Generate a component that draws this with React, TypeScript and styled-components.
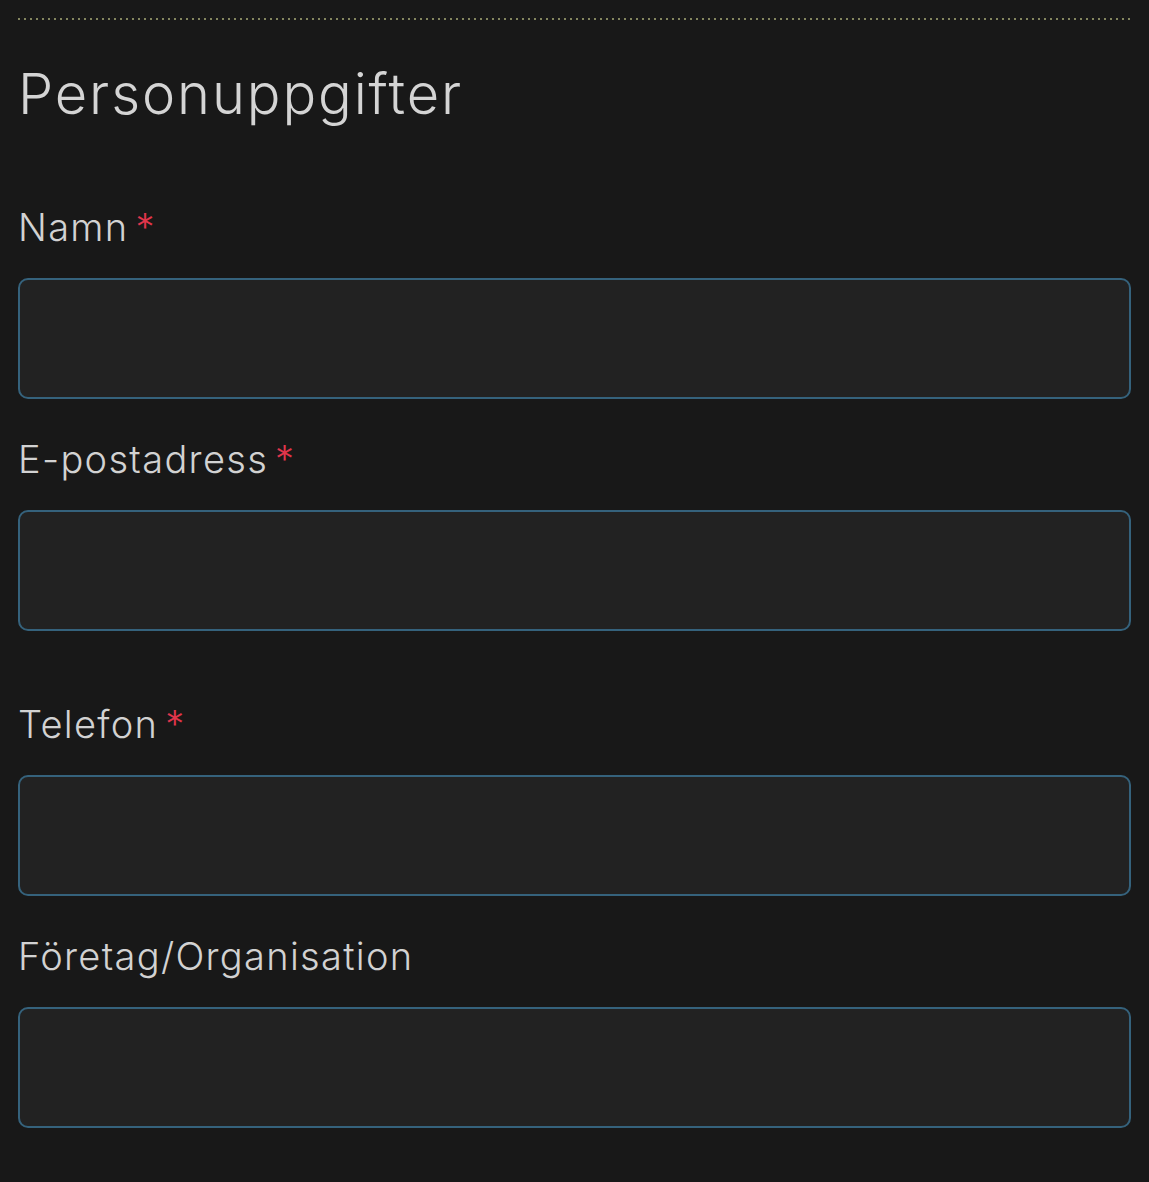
import React from "react";
import styled, { createGlobalStyle } from "styled-components";

const Global = createGlobalStyle`
  html, body {
    margin: 0;
    padding: 0;
    background: #181818;
  }
  body {
    font-family: Inter, "Noto Sans", "Liberation Sans", sans-serif;
    color: #d2d2d2;
  }
`;

const Page = styled.form`
  padding: 18px 18px 40px;
  display: flex;
  flex-direction: column;
`;

const Divider = styled.div`
  height: 2px;
  background-image: repeating-linear-gradient(
    to right,
    #84865f 0,
    #84865f 2px,
    transparent 2px,
    transparent 6px
  );
`;

const Heading = styled.h2`
  margin: 46px 0 86px;
  font-size: 56px;
  line-height: 56px;
  font-weight: 300;
  color: #d4d4d4;
  letter-spacing: 1.9px;
`;

const Field = styled.div<{ $extra?: number }>`
  display: flex;
  flex-direction: column;
  margin-bottom: ${(p) => 41 + (p.$extra ?? 0)}px;
`;

const Label = styled.label`
  display: flex;
  align-items: baseline;
  gap: 7px;
  font-size: 38px;
  line-height: 38px;
  font-weight: 300;
  color: #d2d2d2;
  letter-spacing: 1.3px;
  margin-bottom: 32px;
`;

const Required = styled.span`
  color: #e0354b;
  font-size: 38px;
  letter-spacing: 0;
`;

const Input = styled.input`
  box-sizing: border-box;
  width: 100%;
  height: 121px;
  background: #222222;
  border: 2px solid #35627c;
  border-radius: 10px;
  padding: 0 24px;
  font-family: inherit;
  font-size: 36px;
  color: #e0e0e0;
  outline: none;
`;

const fields: { label: string; required: boolean; type: string; extra?: number }[] = [
  { label: "Namn", required: true, type: "text" },
  { label: "E-postadress", required: true, type: "email", extra: 33 },
  { label: "Telefon", required: true, type: "tel" },
  { label: "Företag/Organisation", required: false, type: "text" },
];

export default function App() {
  return (
    <>
      <Global />
      <Page onSubmit={(e) => e.preventDefault()}>
        <Divider />
        <Heading>Personuppgifter</Heading>
        {fields.map((f) => (
          <Field key={f.label} $extra={f.extra}>
            <Label>
              <span>{f.label}</span>
              {f.required && <Required>*</Required>}
            </Label>
            <Input type={f.type} />
          </Field>
        ))}
      </Page>
    </>
  );
}
